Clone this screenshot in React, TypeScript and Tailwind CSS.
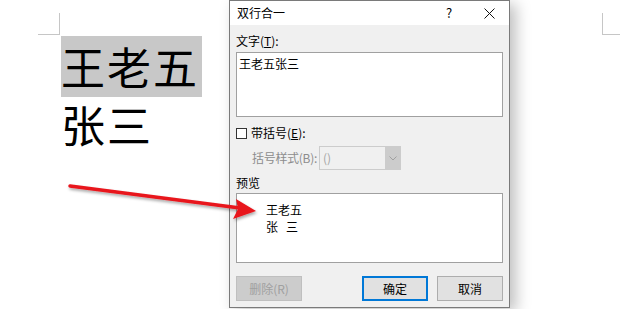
import React from "react";

const font = { fontFamily: '"Microsoft YaHei", "Noto Sans CJK SC", sans-serif' };

const App = () => {
  return (
    <div className="relative w-[620px] h-[309px] bg-white overflow-hidden" style={font}>
      {/* document page */}
      <div className="absolute left-[38px] top-[13px] w-[22px] h-[22px] border-r border-b border-[#c6c6c6]" />
      <div className="absolute left-[602px] top-[13px] w-[22px] h-[22px] border-l border-b border-[#c6c6c6]" />
      <div className="pt-[36px] pl-[61px] text-black text-[44px]">
        <div className="w-[141px] h-[61px] leading-[61px] bg-[#c8c8c8] tracking-[2px]">王老五</div>
        <div className="leading-[54px] tracking-[2px]">张三</div>
      </div>

      {/* dialog */}
      <div className="absolute left-[229px] top-0 w-[281px] h-[308px] bg-[#f0f0f0] border border-[#7a7a7a] shadow-[6px_4px_14px_rgba(0,0,0,0.25)] flex flex-col text-[12px] text-black">
        <div className="h-[24px] bg-white flex items-center pl-[7px] shrink-0">
          <span className="flex-1 text-[12px]">双行合一</span>
          <span className="w-[40px] text-center text-[13px]">?</span>
          <span className="w-[40px] flex justify-center">
            <svg width="11" height="11" viewBox="0 0 11 11">
              <path d="M0.5 0.5 L10.5 10.5 M10.5 0.5 L0.5 10.5" stroke="#111" strokeWidth="1" />
            </svg>
          </span>
        </div>
        <div className="px-[6px] pt-[8px] flex flex-col">
          <div className="h-[16px] leading-[16px]">文字(<span className="underline">T</span>):</div>
          <div className="mt-[3px] h-[65px] bg-white border border-[#a0a0a0] px-[2px] pt-[3px] leading-[16px]">王老五张三</div>
          <div className="mt-[10px] flex items-center h-[12px]">
            <div className="w-[11px] h-[11px] border border-[#333] bg-white" />
            <span className="ml-[4px]">带括号(<span className="underline">E</span>):</span>
          </div>
          <div className="mt-[7px] flex items-center h-[24px]">
            <span className="ml-[16px] w-[67px] whitespace-nowrap text-[#8d8d8d] tracking-[-0.3px]">括号样式(B):</span>
            <div className="w-[82px] h-[24px] border border-[#cccccc] bg-[#f0f0f0] flex">
              <span className="flex-1 pl-[3px] leading-[22px] text-[#a5a5a5]">()</span>
              <div className="w-[15px] bg-[#cccccc] flex items-center justify-center">
                <svg width="8" height="5" viewBox="0 0 8 5">
                  <path d="M0.5 0.5 L4 4 L7.5 0.5" fill="none" stroke="#a0a0a0" strokeWidth="1" />
                </svg>
              </div>
            </div>
          </div>
          <div className="mt-[4px] h-[18px] leading-[18px]">预览</div>
          <div className="mt-[1px] h-[70px] bg-white border border-[#a0a0a0] pl-[29px] pt-[7px] text-[12px] leading-[17px]">
            <div>王老五</div>
            <div>张 &nbsp;&nbsp;三</div>
          </div>
          <div className="mt-[13px] flex items-center">
            <div className="w-[66px] h-[25px] bg-[#cccccc] border border-[#bfbfbf] text-[#a0a0a0] flex items-center justify-center">删除(R)</div>
            <div className="flex-1" />
            <div className="w-[66px] h-[25px] bg-[#e1e1e1] border-2 border-[#0078d7] flex items-center justify-center">确定</div>
            <div className="w-[66px] h-[25px] ml-[9px] bg-[#e1e1e1] border border-[#adadad] flex items-center justify-center">取消</div>
          </div>
        </div>
      </div>

      {/* arrow over everything */}
      <svg className="absolute left-0 top-0 pointer-events-none" width="620" height="309">
        <defs>
          <filter id="s" x="-10%" y="-50%" width="120%" height="200%">
            <feDropShadow dx="1" dy="2" stdDeviation="1.5" floodOpacity="0.35" />
          </filter>
        </defs>
        <g filter="url(#s)">
          <line x1="70" y1="186" x2="240" y2="208" stroke="#e8141b" strokeWidth="3.5" strokeLinecap="round" />
          <polygon points="256,211 236,199 238,209 233,219" fill="#e8141b" />
        </g>
      </svg>
    </div>
  );
};

export default App;
